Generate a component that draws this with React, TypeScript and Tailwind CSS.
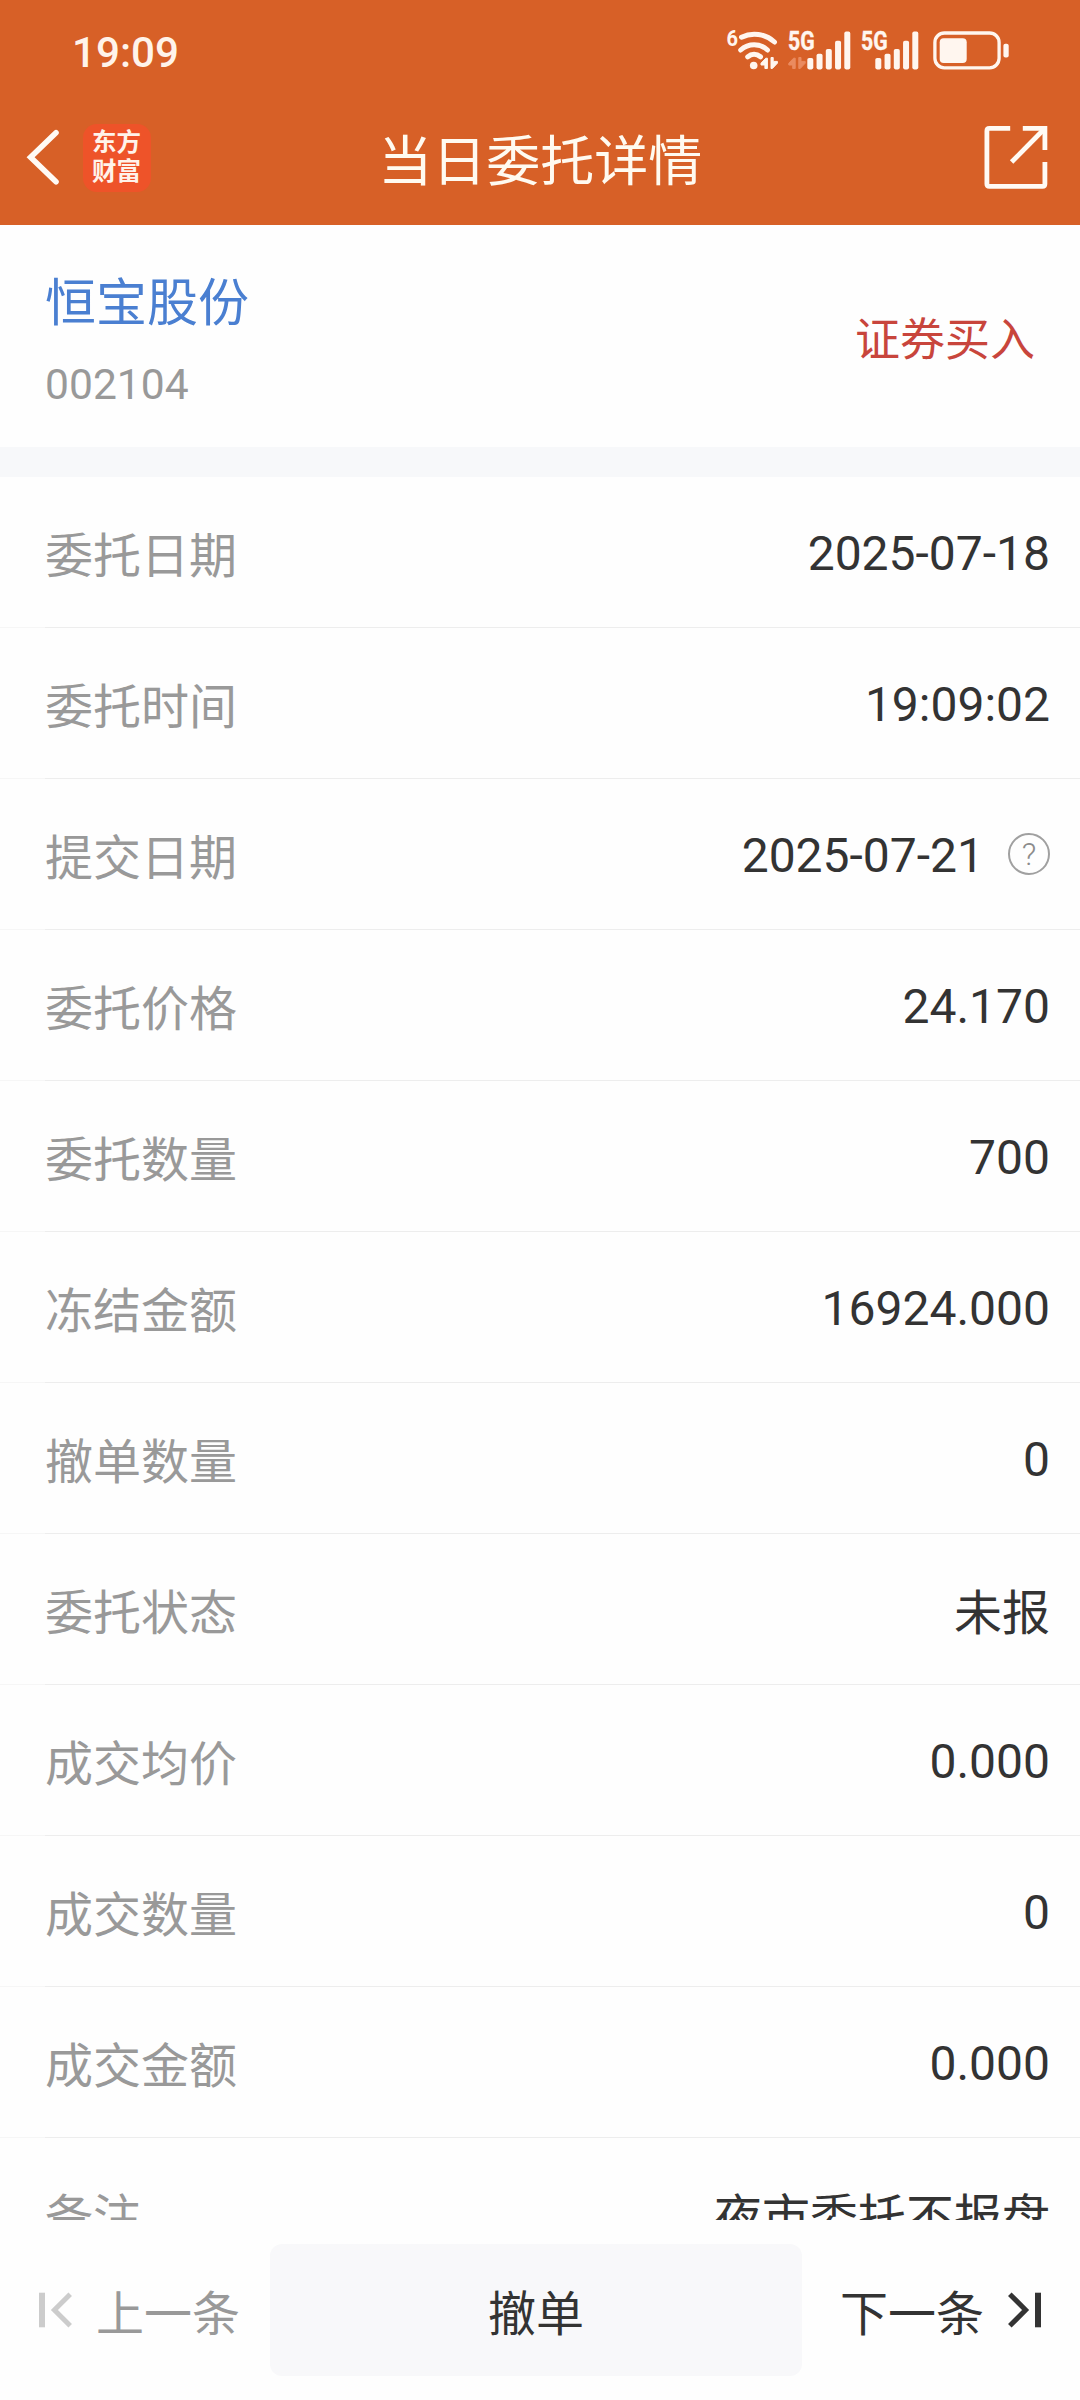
import React from "react";

type Row = { label: string; value: string; help?: boolean; cjk?: boolean };

const rows: Row[] = [
  { label: "委托日期", value: "2025-07-18" },
  { label: "委托时间", value: "19:09:02" },
  { label: "提交日期", value: "2025-07-21", help: true },
  { label: "委托价格", value: "24.170" },
  { label: "委托数量", value: "700" },
  { label: "冻结金额", value: "16924.000" },
  { label: "撤单数量", value: "0" },
  { label: "委托状态", value: "未报", cjk: true },
  { label: "成交均价", value: "0.000" },
  { label: "成交数量", value: "0" },
  { label: "成交金额", value: "0.000" },
  { label: "备注", value: "夜市委托不报盘", cjk: true },
];

const font = "font-['Roboto','Noto_Sans_CJK_SC',sans-serif]";

function DataArrows({ x, fill }: { x: number; fill: string }) {
  return (
    <g fill={fill} stroke={fill} strokeWidth="1" strokeLinejoin="round" transform={`translate(${x} 0)`}>
      <path d="M7.2 30.2V40.5H4.7V37H0.8V35.2L5.6 30.2Z" />
      <path d="M10.8 29.5H13V33.4H17.2V35.2L12.2 40.5H10.8Z" />
    </g>
  );
}

function WifiIcon() {
  return (
    <svg width="54" height="44" viewBox="0 0 54 44" className="block overflow-visible">
      <text x="2.5" y="18" fontSize="21.5" fontWeight="700" fill="#fff6ef" fontFamily="Roboto" textLength="11.5" lengthAdjust="spacingAndGlyphs">
        6
      </text>
      <g fill="none" stroke="#fff6ef" strokeWidth="5" strokeLinecap="round">
        <path d="M17.5 9.2C28 4 41 5.5 50.5 14" />
        <path d="M16.7 22C24.5 15 36 15 43.5 22" />
        <path d="M23.7 28.8C27.5 25.5 32.5 25.5 36.5 28.8" />
      </g>
      <circle cx="29.7" cy="37.5" r="3.8" fill="#fff6ef" />
      <DataArrows x={36.2} fill="#fff6ef" />
    </svg>
  );
}

function SignalIcon({ arrows = false }: { arrows?: boolean }) {
  const x0 = arrows ? 19.3 : 14.3;
  const tops = [30, 25.7, 21, 12.8, 3.6];
  return (
    <svg width={arrows ? 64 : 58} height="44" viewBox={arrows ? "0 0 64 44" : "0 0 58 44"} className="block">
      <text x="0" y="22.1" fontSize="25" fontWeight="700" fill="#fff6ef" stroke="#fff6ef" strokeWidth="0.4" fontFamily="Roboto" textLength="26.6" lengthAdjust="spacingAndGlyphs">
        5G
      </text>
      {tops.map((t, i) => (
        <rect key={t} x={x0 + i * 9.25} y={t} width="6" height={41.4 - t} rx="1.8" fill="#fff6ef" />
      ))}
      {arrows && <DataArrows x={0} fill="#ea8b60" />}
    </svg>
  );
}

function BatteryIcon() {
  return (
    <svg width="78" height="44" viewBox="0 0 78 44" className="block">
      <rect x="1.9" y="5" width="64.2" height="34.8" rx="9.5" fill="none" stroke="#fff6ef" strokeWidth="3.3" />
      <rect x="6.7" y="10.3" width="27" height="24.6" rx="4" fill="#fff6ef" />
      <rect x="70.4" y="15.7" width="5.3" height="13.7" rx="2" fill="#fff6ef" />
    </svg>
  );
}

function SkipIcon({ color, flip = false }: { color: string; flip?: boolean }) {
  return (
    <svg width="34" height="38" viewBox="0 0 34 38" className={flip ? "block -scale-x-100" : "block"}>
      <path d="M3 1.7V36.3" stroke={color} strokeWidth="6" />
      <path d="M31.2 3.2L15.4 19L31.2 34.8" stroke={color} strokeWidth="5" fill="none" />
    </svg>
  );
}

function HelpIcon() {
  return (
    <span className="ml-6 flex size-[42px] items-center justify-center rounded-full border-2 border-[#a0a0a0] text-[32px] leading-none font-light text-[#8c8c8c]">
      ?
    </span>
  );
}

export default function App() {
  return (
    <div className={`${font} flex h-[2400px] w-[1080px] flex-col overflow-hidden bg-[#fefefe] text-[#333333]`} lang="zh-CN">
      <header className="h-[225px] shrink-0 bg-[#d76027]">
        <div className="flex h-[100px] items-start pt-7 pl-[72px]">
          <span className="h-11 w-[652px] text-[42.2px] leading-[49px] font-medium text-[#fff3ea]">19:09</span>
          <WifiIcon />
          <span className="w-[10px]" />
          <SignalIcon arrows />
          <span className="w-[9px]" />
          <SignalIcon />
          <span className="w-[14px]" />
          <BatteryIcon />
        </div>
        <div className="flex h-[125px] items-start pr-[32.5px] pl-6">
          <svg width="40" height="64" viewBox="0 0 40 64" className="mt-[25px] block">
            <path d="M32 7.8L6.6 32.2L32 56.8" fill="none" stroke="#fffaf4" strokeWidth="5.6" strokeLinecap="round" />
          </svg>
          <div className="mt-[23.5px] ml-[19px] flex h-[68px] w-[68px] flex-col items-center justify-center rounded-[14px] bg-[#ee5329] pr-px pb-0.5 text-[24.5px] leading-[29px] font-bold text-[#fff3ea]">
            <span>东方</span>
            <span>财富</span>
          </div>
          <h1 className="mt-[23px] flex-1 pr-[54px] text-center text-[54px] leading-[80px] font-normal text-[#fffaf0]">当日委托详情</h1>
          <svg width="64" height="64" viewBox="0 0 64 64" className="mt-[26px] block" fill="none" stroke="#fffaf4" strokeWidth="4.8">
            <path d="M26.2 2.4H5.4Q2.9 2.4 2.9 4.9V58Q2.9 60.4 5.4 60.4H58.5Q60.9 60.4 60.9 58V36" />
            <path d="M38.8 2.4H60.9V24" />
            <path d="M60.5 2.8L27.6 36" />
          </svg>
        </div>
      </header>

      <section className="flex h-[222px] shrink-0 items-start justify-between px-[45px]">
        <div>
          <div className="mt-[49px] text-[51px] leading-[60px] text-[#4a7fd1]">恒宝股份</div>
          <div className="mt-[25px] text-[42.6px] leading-[50px] text-[#999999]">002104</div>
        </div>
        <div className="mt-[86px] text-[45px] leading-[60px] text-[#c8453c]">证券买入</div>
      </section>

      <div className="h-[30px] shrink-0 bg-[#f7f8fa]" />

      <main className="min-h-0 flex-1 overflow-hidden">
        {rows.map((row) => (
          <div key={row.label} className="flex h-[151px] flex-col">
            <div className="flex flex-1 items-center justify-between pr-[30px] pl-[45px] text-[48px] leading-[60px]">
              <span className="pt-[10px] text-[#999999]">{row.label}</span>
              <span className="flex items-center">
                <span className={row.cjk ? "pt-[10px]" : "pt-1"}>{row.value}</span>
                {row.help && <HelpIcon />}
              </span>
            </div>
            <div className="flex h-px">
              <div className="w-[45px] bg-[#f6f6f6]" />
              <div className="flex-1 bg-[#ededed]" />
            </div>
          </div>
        ))}
      </main>

      <footer className="flex h-[180px] shrink-0 items-start pt-6 text-[48px] leading-[60px]">
        <div className="flex h-[132px] w-[270px] items-center pl-[39px] text-[#999999]">
          <SkipIcon color="#cccccc" />
          <span className="ml-[23px] pt-[10px]">上一条</span>
        </div>
        <button className="h-[132px] w-[532px] rounded-xl bg-[#f8f8fa] pt-[10px]">撤单</button>
        <div className="flex h-[132px] flex-1 items-center justify-end pr-[39px]">
          <span className="mr-[23px] pt-[10px]">下一条</span>
          <SkipIcon color="#333333" flip />
        </div>
      </footer>
    </div>
  );
}
